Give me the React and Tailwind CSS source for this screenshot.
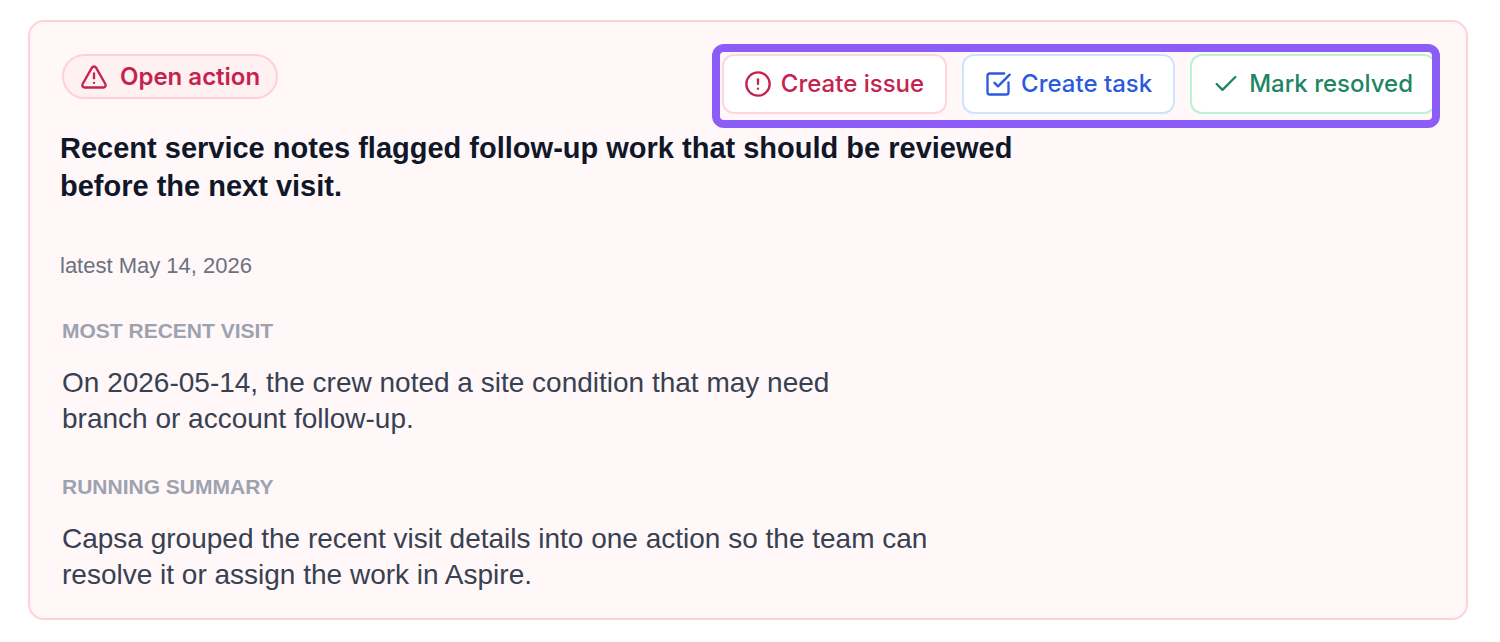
import { CircleAlert, SquareCheckBig, Check, TriangleAlert } from 'lucide-react';

const actions = [
  { label: 'Create issue', icon: CircleAlert, style: 'border-[#ffd6dc] text-[#c5234f]' },
  { label: 'Create task', icon: SquareCheckBig, style: 'border-[#cfe3ff] text-[#2b5bdc]' },
  { label: 'Mark resolved', icon: Check, style: 'border-[#b9f3d3] text-[#1f8562]' },
];

const sections = [
  {
    title: 'Most recent visit',
    width: 'max-w-[800px]',
    text: 'On 2026-05-14, the crew noted a site condition that may need branch or account follow-up.',
  },
  {
    title: 'Running summary',
    width: 'max-w-[900px]',
    text: 'Capsa grouped the recent visit details into one action so the team can resolve it or assign the work in Aspire.',
  },
];

function StatusBadge() {
  return (
    <span className="flex h-[45px] items-center gap-3 rounded-full border-2 border-[#ffd0d7] bg-[#fff0f2] px-4 font-[Inter,sans-serif] text-2xl font-semibold text-[#c5234f]">
      <TriangleAlert size={28} strokeWidth={2} />
      Open action
    </span>
  );
}

function ActionBar() {
  return (
    <div className="relative flex gap-[15px]">
      {actions.map(({ label, icon: Icon, style }) => (
        <button
          key={label}
          type="button"
          className={`flex h-[60px] cursor-pointer items-center gap-[9px] rounded-xl border-2 bg-white pr-[21px] pl-5 font-[Inter,sans-serif] text-2xl font-medium ${style}`}
        >
          <Icon size={28} strokeWidth={2} />
          {label}
        </button>
      ))}
      {/* Highlight frame drawn over the buttons */}
      <div className="pointer-events-none absolute -top-[10px] -right-1 -bottom-[14px] -left-[10px] rounded-xl border-8 border-[#8b5cf6]" />
    </div>
  );
}

export default function App() {
  return (
    <main className="bg-white py-5 pr-8 pl-7 font-['Liberation_Sans',Arial,sans-serif]">
      <article className="rounded-2xl border-2 border-[#ffd0d7] bg-[#fff7f8] px-[30px] pt-8 pb-[25px]">
        <div className="flex items-start justify-between pl-[2px]">
          <StatusBadge />
          <ActionBar />
        </div>

        <h1 className="mt-[15px] max-w-[980px] text-[29px] leading-[38px] font-bold text-[#0f1729]">
          Recent service notes flagged follow-up work that should be reviewed before the next visit.
        </h1>
        <p className="mt-[46px] text-[22px] leading-[30px] text-[#6b7280]">latest May 14, 2026</p>

        {sections.map(({ title, width, text }) => (
          <section key={title} className="mt-[34px] pl-[2px]">
            <h2 className="text-[21px] leading-8 font-bold text-[#9ca3af] uppercase">{title}</h2>
            <p className={`mt-[18px] text-[28px] leading-9 text-[#374151] ${width}`}>{text}</p>
          </section>
        ))}
      </article>
    </main>
  );
}
